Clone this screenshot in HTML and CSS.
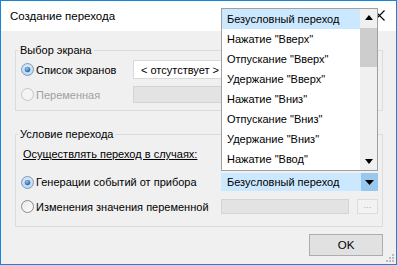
FILE: index.html
```html
<!DOCTYPE html>
<html lang="ru">
<head>
<meta charset="utf-8">
<title>Создание перехода</title>
<link rel="stylesheet" href="styles.css">
</head>
<body>
<div class="window">
  <div class="titlebar">
    <span class="title">Создание перехода</span>
    <svg class="close" width="11" height="11" viewBox="0 0 11 11"><path d="M0.5 0.5 L10.5 10.5 M10.5 0.5 L0.5 10.5" stroke="#000" stroke-width="1.1" fill="none"/></svg>
  </div>
  <div class="content">
    <fieldset class="group g1">
      <legend>Выбор экрана</legend>
      <div class="row r1">
        <label class="radio">
          <svg class="rb" width="13" height="13" viewBox="0 0 13 13"><defs><radialGradient id="rg1" cx="50%" cy="40%" r="60%"><stop offset="0" stop-color="#e9f3fc"/><stop offset="1" stop-color="#b9d3ec"/></radialGradient><radialGradient id="dot1" cx="40%" cy="35%" r="70%"><stop offset="0" stop-color="#8fc2f0"/><stop offset="1" stop-color="#1b5aa3"/></radialGradient></defs><circle cx="6.5" cy="6.5" r="6" fill="url(#rg1)" stroke="#7f9db9"/><circle cx="6.5" cy="6.5" r="2.8" fill="url(#dot1)"/></svg>
          <span>Список экранов</span>
        </label>
        <div class="combo plain">&lt; отсутствует &gt;</div>
      </div>
      <div class="row r2">
        <label class="radio disabled">
          <svg class="rb" width="13" height="13" viewBox="0 0 13 13"><circle cx="6.5" cy="6.5" r="6" fill="#f4f4f4" stroke="#c4c4c4"/></svg>
          <span>Переменная</span>
        </label>
        <div class="field f1"></div>
      </div>
    </fieldset>
    <fieldset class="group g2">
      <legend>Условие перехода</legend>
      <div class="hint">Осуществлять переход в случаях:</div>
      <div class="row r3">
        <label class="radio">
          <svg class="rb" width="13" height="13" viewBox="0 0 13 13"><defs><radialGradient id="rg2" cx="50%" cy="40%" r="60%"><stop offset="0" stop-color="#e9f3fc"/><stop offset="1" stop-color="#b9d3ec"/></radialGradient><radialGradient id="dot2" cx="40%" cy="35%" r="70%"><stop offset="0" stop-color="#8fc2f0"/><stop offset="1" stop-color="#1b5aa3"/></radialGradient></defs><circle cx="6.5" cy="6.5" r="6" fill="url(#rg2)" stroke="#7f9db9"/><circle cx="6.5" cy="6.5" r="2.8" fill="url(#dot2)"/></svg>
          <span>Генерации событий от прибора</span>
        </label>
        <div class="combo selected">
          <span class="ctext">Безусловный переход</span>
          <span class="dropbtn"><svg width="9" height="5" viewBox="0 0 9 5"><path d="M0 0 H9 L4.5 5 Z" fill="#000"/></svg></span>
        </div>
      </div>
      <div class="row r4">
        <label class="radio">
          <svg class="rb" width="13" height="13" viewBox="0 0 13 13"><defs><linearGradient id="ug" x1="0" y1="0" x2="1" y2="1"><stop offset="0" stop-color="#e6e6e6"/><stop offset="1" stop-color="#ffffff"/></linearGradient></defs><circle cx="6.5" cy="6.5" r="6" fill="url(#ug)" stroke="#8a8a8a"/></svg>
          <span>Изменения значения переменной</span>
        </label>
        <div class="field f2"></div>
        <div class="dots">...</div>
      </div>
    </fieldset>
    <div class="footer">
      <button class="ok">OK</button>
    </div>
  </div>
  <svg class="grip" width="10" height="10" viewBox="0 0 10 10"><g fill="#bcbcbc"><rect x="8" y="2" width="2" height="2"/><rect x="5" y="5" width="2" height="2"/><rect x="8" y="5" width="2" height="2"/><rect x="2" y="8" width="2" height="2"/><rect x="5" y="8" width="2" height="2"/><rect x="8" y="8" width="2" height="2"/></g></svg>
  <div class="popup">
    <ul class="list">
      <li class="sel">Безусловный переход</li>
      <li>Нажатие "Вверх"</li>
      <li>Отпускание "Вверх"</li>
      <li>Удержание "Вверх"</li>
      <li>Нажатие "Вниз"</li>
      <li>Отпускание "Вниз"</li>
      <li>Удержание "Вниз"</li>
      <li>Нажатие "Ввод"</li>
    </ul>
    <div class="scrollbar">
      <div class="sbtn"><svg width="8" height="5" viewBox="0 0 8 5"><path d="M0 5 H8 L4 0 Z" fill="#000"/></svg></div>
      <div class="thumb"></div>
      <div class="track"></div>
      <div class="sbtn"><svg width="8" height="5" viewBox="0 0 8 5"><path d="M0 0 H8 L4 5 Z" fill="#000"/></svg></div>
    </div>
  </div>
</div>
</body>
</html>
```

FILE: styles.css
```css
html, body {
  margin: 0;
  padding: 0;
}
body {
  font-family: "Liberation Sans", Arial, sans-serif;
  font-size: 11px;
  color: #000;
  background: #f0f0f0;
}
.window {
  position: relative;
  width: 397px;
  height: 265px;
  box-sizing: border-box;
  border: 1px solid #1883d7;
  background: #f0f0f0;
  display: flex;
  flex-direction: column;
  overflow: hidden;
}
.titlebar {
  height: 30px;
  flex: none;
  background: #fff;
  display: flex;
  align-items: center;
  justify-content: space-between;
  padding: 0 11px 1px 9px;
  box-sizing: border-box;
}
.title {
  font-size: 11.5px;
  line-height: 14px;
}
.close {
  display: block;
}
.content {
  padding: 12px 13px 0 14px;
  display: flex;
  flex-direction: column;
}
.group {
  margin: 0;
  border: 1px solid #dcdcdc;
  min-width: 0;
  padding: 0 4px 0 5px;
}
.group legend {
  padding: 0 2px;
  margin-left: -3px;
  line-height: 15px;
}
.g1 {
  padding-top: 2px;
  padding-bottom: 7px;
}
.g2 {
  margin-top: 16px;
  padding-top: 5px;
  padding-bottom: 12px;
}
.row {
  display: flex;
  align-items: center;
}
.radio {
  width: 200px;
  display: flex;
  align-items: center;
  flex: none;
  white-space: nowrap;
}
.g1 .radio {
  width: 112px;
}
.rb {
  display: block;
  flex: none;
  margin-right: 2px;
}
.radio.disabled {
  color: #a0a0a0;
}
.combo {
  box-sizing: border-box;
  display: flex;
  align-items: center;
  white-space: nowrap;
}
.combo.plain {
  width: 245px;
  height: 19px;
  background: #fff;
  border: 1px solid #d9d9d9;
  padding-left: 7px;
}
.r2 {
  margin-top: 7px;
}
.field {
  box-sizing: border-box;
  background: #e3e3e3;
  border: 1px solid #d4d4d4;
}
.f1 {
  width: 245px;
  height: 17px;
}
.hint {
  line-height: 14px;
  padding-left: 2px;
  text-decoration: underline;
}
.r3 {
  margin-top: 12px;
}
.combo.selected {
  width: 157px;
  height: 18px;
  background: #cce8ff;
  padding-left: 6px;
}
.ctext {
  flex: 1;
}
.dropbtn {
  width: 17px;
  height: 18px;
  background: #99c8ee;
  display: flex;
  align-items: center;
  justify-content: center;
}
.dropbtn svg {
  display: block;
}
.r4 {
  margin-top: 8px;
}
.f2 {
  width: 128px;
  height: 15px;
}
.dots {
  box-sizing: border-box;
  margin-left: 8px;
  width: 21px;
  height: 15px;
  border: 1px solid #dcdcdc;
  background: #f2f2f2;
  color: #a8a8a8;
  font-size: 9px;
  line-height: 11px;
  text-align: center;
}
.footer {
  display: flex;
  justify-content: flex-end;
  margin-top: 7px;
}
.ok {
  width: 74px;
  height: 22px;
  margin: 0;
  padding: 0;
  background: #e1e1e1;
  border: 1px solid #adadad;
  font-family: "Liberation Sans", Arial, sans-serif;
  font-size: 11.5px;
  color: #000;
}
.grip {
  position: absolute;
  right: 2px;
  bottom: 2px;
}
.popup {
  position: absolute;
  left: 220px;
  top: 7px;
  width: 157px;
  height: 163px;
  box-sizing: border-box;
  border: 1px solid #a0a0a0;
  background: #fff;
  display: flex;
}
.list {
  list-style: none;
  margin: 0;
  padding: 0;
  flex: 1;
}
.list li {
  height: 20px;
  line-height: 20px;
  padding-left: 5px;
  white-space: nowrap;
}
.list li.sel {
  background: #cce8ff;
}
.scrollbar {
  width: 17px;
  flex: none;
  background: #f0f0f0;
  display: flex;
  flex-direction: column;
}
.sbtn {
  height: 17px;
  display: flex;
  align-items: center;
  justify-content: center;
}
.sbtn svg {
  display: block;
}
.thumb {
  margin-top: 2px;
  height: 39px;
  background: #cdcdcd;
}
.track {
  flex: 1;
}
```
